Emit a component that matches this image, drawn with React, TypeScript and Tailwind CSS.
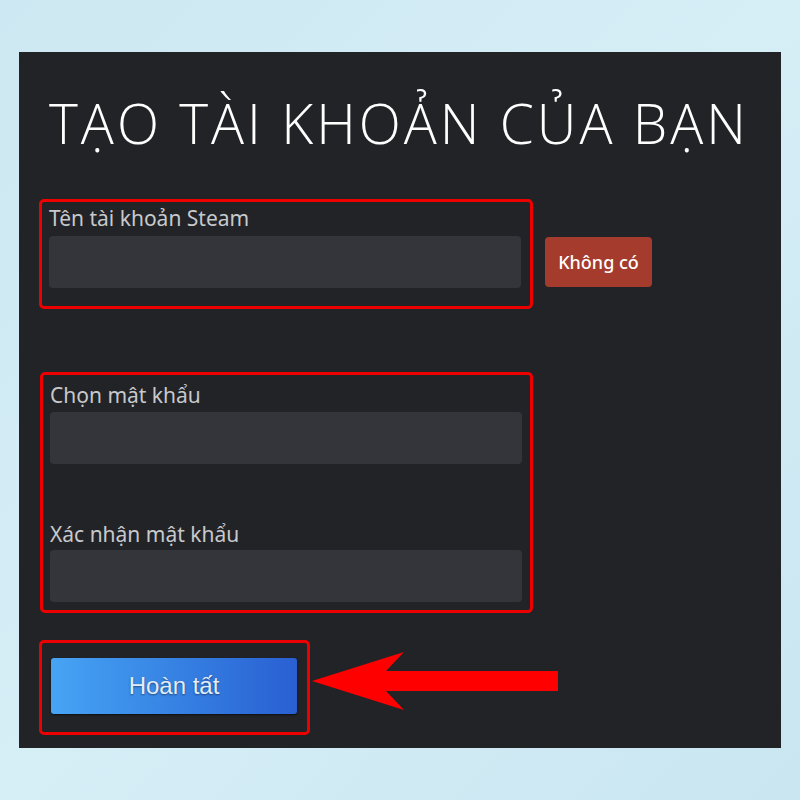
import React from "react";

const label = "block text-[21px] leading-[24px] text-[#c7c9cc]";
const input = "h-[52px] w-[472px] rounded-[4px] bg-[#33353b]";

export default function App() {
  return (
    <div
      className="w-[800px] h-[800px] bg-gradient-to-br from-[#cde8f2] via-[#d6eef6] to-[#c9e6f1] pt-[52px] pl-[19px]"
      style={{ fontFamily: '"Noto Sans", "Open Sans", sans-serif' }}
    >
      <div className="w-[762px] h-[696px] bg-[#222327] flex flex-col pl-[20px]">
        <h1
          className="mt-[36px] ml-[10px] text-[55px] leading-[70px] font-light tracking-[3px] text-white whitespace-nowrap"
          style={{ fontFamily: '"Open Sans", "Noto Sans", sans-serif' }}
        >
          TẠO TÀI KHOẢN CỦA BẠN
        </h1>

        <div className="mt-[41px] flex items-start">
          <div className="w-[494px] h-[110px] border-[3px] border-[#ee0000] rounded-[5px] pl-[7px] pt-[4px]">
            <span className={label}>Tên tài khoản Steam</span>
            <div className={input + " mt-[6px]"} />
          </div>
          <button className="ml-[12px] mt-[38px] w-[107px] h-[50px] rounded-[4px] bg-[#a43b2d] text-white text-[18px] font-medium">
            Không có
          </button>
        </div>

        <div className="mt-[63px] ml-[1px] w-[493px] h-[241px] border-[3px] border-[#ee0000] rounded-[5px] pl-[7px] pt-[8px]">
          <span className={label}>Chọn mật khẩu</span>
          <div className={input + " mt-[5px]"} />
          <span className={label + " mt-[58px]"}>Xác nhận mật khẩu</span>
          <div className={input + " mt-[4px]"} />
        </div>

        <div className="mt-[27px] flex items-start">
          <div className="w-[271px] h-[95px] border-[3px] border-[#ee0000] rounded-[5px] pl-[9px] pt-[15px]">
            <button
              className="w-[246px] h-[56px] rounded-[3px] bg-gradient-to-r from-[#47a4f4] to-[#2a5fd2] text-[24px] text-[#e3ecf7] shadow-[0_1px_2px_rgba(0,0,0,0.6)]"
              style={{ fontFamily: '"Liberation Sans", Arial, sans-serif', textShadow: "0 1px 2px rgba(0,0,0,0.45)" }}
            >
              Hoàn tất
            </button>
          </div>
          <svg width="248" height="60" viewBox="0 0 248 60" className="ml-[2px] mt-[12px]">
            <polygon
              points="0,29 92,0 74,19 246,19 246,39 74,39 92,58"
              fill="#ff0000"
            />
          </svg>
        </div>
      </div>
    </div>
  );
}
